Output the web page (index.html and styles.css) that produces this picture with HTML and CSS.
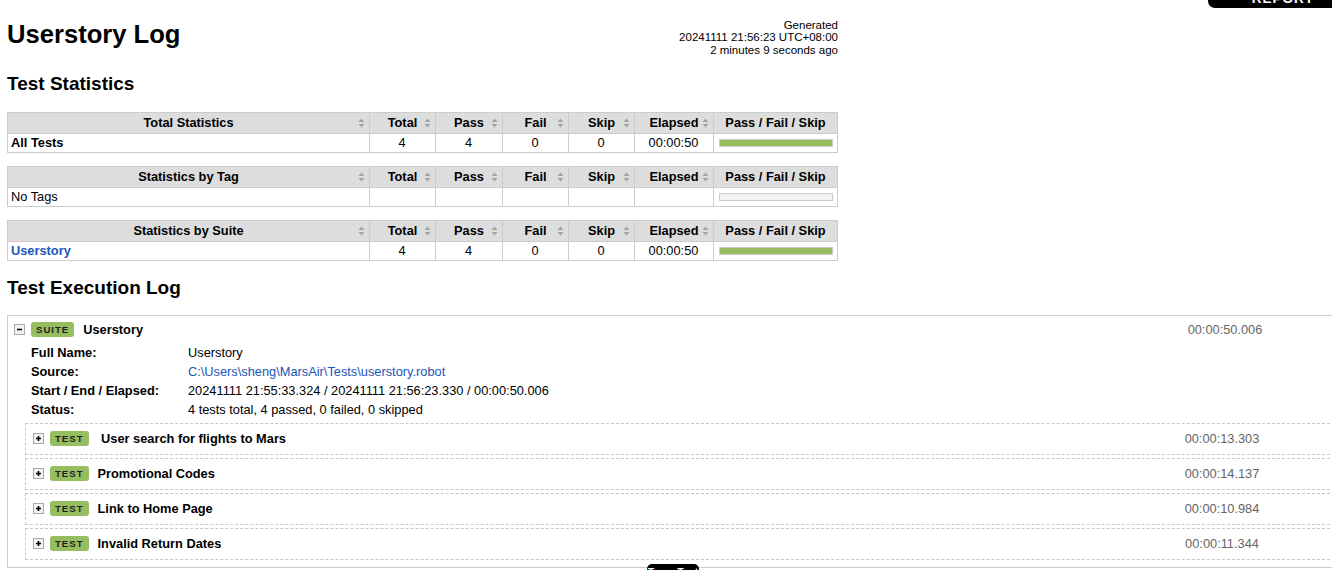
FILE: index.html
```html
<!DOCTYPE html>
<html lang="en">
<head>
<meta charset="utf-8">
<title>Userstory Log</title>
<link rel="stylesheet" href="styles.css">
</head>
<body>
<a class="report-link" href="#">REPORT</a>

<div class="header">
  <h1 class="title">Userstory Log</h1>
  <div class="generated">Generated<br>20241111 21:56:23 UTC+08:00<br>2 minutes 9 seconds ago</div>
</div>

<h2 class="section-title stats-title">Test Statistics</h2>

<table class="statistics">
  <colgroup>
    <col class="c-name"><col class="c-stat"><col class="c-stat2"><col class="c-stat"><col class="c-stat"><col class="c-elapsed"><col class="c-graph">
  </colgroup>
  <tr>
    <th>Total Statistics<svg class="sort" width="7" height="10" viewBox="0 0 7 10"><path d="M3.5 0.5L6.5 4H0.5Z M3.5 9.5L6.5 6H0.5Z"/></svg></th>
    <th>Total<svg class="sort" width="7" height="10" viewBox="0 0 7 10"><path d="M3.5 0.5L6.5 4H0.5Z M3.5 9.5L6.5 6H0.5Z"/></svg></th>
    <th>Pass<svg class="sort" width="7" height="10" viewBox="0 0 7 10"><path d="M3.5 0.5L6.5 4H0.5Z M3.5 9.5L6.5 6H0.5Z"/></svg></th>
    <th>Fail<svg class="sort" width="7" height="10" viewBox="0 0 7 10"><path d="M3.5 0.5L6.5 4H0.5Z M3.5 9.5L6.5 6H0.5Z"/></svg></th>
    <th>Skip<svg class="sort" width="7" height="10" viewBox="0 0 7 10"><path d="M3.5 0.5L6.5 4H0.5Z M3.5 9.5L6.5 6H0.5Z"/></svg></th>
    <th>Elapsed<svg class="sort" width="7" height="10" viewBox="0 0 7 10"><path d="M3.5 0.5L6.5 4H0.5Z M3.5 9.5L6.5 6H0.5Z"/></svg></th>
    <th>Pass / Fail / Skip</th>
  </tr>
  <tr>
    <td class="stat-name bold">All Tests</td>
    <td class="num">4</td><td class="num">4</td><td class="num">0</td><td class="num">0</td><td class="num">00:00:50</td>
    <td class="graph-cell"><div class="graph"><div class="pass-bar" style="width:100%"></div></div></td>
  </tr>
</table>

<table class="statistics">
  <colgroup>
    <col class="c-name"><col class="c-stat"><col class="c-stat2"><col class="c-stat"><col class="c-stat"><col class="c-elapsed"><col class="c-graph">
  </colgroup>
  <tr>
    <th>Statistics by Tag<svg class="sort" width="7" height="10" viewBox="0 0 7 10"><path d="M3.5 0.5L6.5 4H0.5Z M3.5 9.5L6.5 6H0.5Z"/></svg></th>
    <th>Total<svg class="sort" width="7" height="10" viewBox="0 0 7 10"><path d="M3.5 0.5L6.5 4H0.5Z M3.5 9.5L6.5 6H0.5Z"/></svg></th>
    <th>Pass<svg class="sort" width="7" height="10" viewBox="0 0 7 10"><path d="M3.5 0.5L6.5 4H0.5Z M3.5 9.5L6.5 6H0.5Z"/></svg></th>
    <th>Fail<svg class="sort" width="7" height="10" viewBox="0 0 7 10"><path d="M3.5 0.5L6.5 4H0.5Z M3.5 9.5L6.5 6H0.5Z"/></svg></th>
    <th>Skip<svg class="sort" width="7" height="10" viewBox="0 0 7 10"><path d="M3.5 0.5L6.5 4H0.5Z M3.5 9.5L6.5 6H0.5Z"/></svg></th>
    <th>Elapsed<svg class="sort" width="7" height="10" viewBox="0 0 7 10"><path d="M3.5 0.5L6.5 4H0.5Z M3.5 9.5L6.5 6H0.5Z"/></svg></th>
    <th>Pass / Fail / Skip</th>
  </tr>
  <tr>
    <td class="stat-name">No Tags</td>
    <td class="num"></td><td class="num"></td><td class="num"></td><td class="num"></td><td class="num"></td>
    <td class="graph-cell"><div class="graph empty"></div></td>
  </tr>
</table>

<table class="statistics">
  <colgroup>
    <col class="c-name"><col class="c-stat"><col class="c-stat2"><col class="c-stat"><col class="c-stat"><col class="c-elapsed"><col class="c-graph">
  </colgroup>
  <tr>
    <th>Statistics by Suite<svg class="sort" width="7" height="10" viewBox="0 0 7 10"><path d="M3.5 0.5L6.5 4H0.5Z M3.5 9.5L6.5 6H0.5Z"/></svg></th>
    <th>Total<svg class="sort" width="7" height="10" viewBox="0 0 7 10"><path d="M3.5 0.5L6.5 4H0.5Z M3.5 9.5L6.5 6H0.5Z"/></svg></th>
    <th>Pass<svg class="sort" width="7" height="10" viewBox="0 0 7 10"><path d="M3.5 0.5L6.5 4H0.5Z M3.5 9.5L6.5 6H0.5Z"/></svg></th>
    <th>Fail<svg class="sort" width="7" height="10" viewBox="0 0 7 10"><path d="M3.5 0.5L6.5 4H0.5Z M3.5 9.5L6.5 6H0.5Z"/></svg></th>
    <th>Skip<svg class="sort" width="7" height="10" viewBox="0 0 7 10"><path d="M3.5 0.5L6.5 4H0.5Z M3.5 9.5L6.5 6H0.5Z"/></svg></th>
    <th>Elapsed<svg class="sort" width="7" height="10" viewBox="0 0 7 10"><path d="M3.5 0.5L6.5 4H0.5Z M3.5 9.5L6.5 6H0.5Z"/></svg></th>
    <th>Pass / Fail / Skip</th>
  </tr>
  <tr>
    <td class="stat-name"><a class="link bold" href="#">Userstory</a></td>
    <td class="num">4</td><td class="num">4</td><td class="num">0</td><td class="num">0</td><td class="num">00:00:50</td>
    <td class="graph-cell"><div class="graph"><div class="pass-bar" style="width:100%"></div></div></td>
  </tr>
</table>

<h2 class="section-title exec-title">Test Execution Log</h2>

<div class="suite">
  <div class="element-header">
    <svg class="toggle" width="11" height="11" viewBox="0 0 11 11"><rect x="0.5" y="0.5" width="10" height="10" fill="#f3f3f3" stroke="#a8a8a8"/><path d="M3 5.5h5" stroke="#000" stroke-width="1.6"/></svg>
    <span class="label">SUITE</span>
    <span class="name">Userstory</span>
    <span class="elapsed">00:00:50.006</span>
  </div>
  <table class="meta">
    <tr><th>Full Name:</th><td>Userstory</td></tr>
    <tr><th>Source:</th><td><a class="link" href="#">C:\Users\sheng\MarsAir\Tests\userstory.robot</a></td></tr>
    <tr><th>Start / End / Elapsed:</th><td>20241111 21:55:33.324 / 20241111 21:56:23.330 / 00:00:50.006</td></tr>
    <tr><th>Status:</th><td>4 tests total, 4 passed, 0 failed, 0 skipped</td></tr>
  </table>
  <div class="children">
    <div class="test">
      <svg class="toggle" width="11" height="11" viewBox="0 0 11 11"><rect x="0.5" y="0.5" width="10" height="10" fill="#f3f3f3" stroke="#a8a8a8"/><path d="M3 5.5h5M5.5 3v5" stroke="#000" stroke-width="1.6"/></svg>
      <span class="label">TEST</span>
      <span class="name"> User search for flights to Mars</span>
      <span class="elapsed">00:00:13.303</span>
    </div>
    <div class="test">
      <svg class="toggle" width="11" height="11" viewBox="0 0 11 11"><rect x="0.5" y="0.5" width="10" height="10" fill="#f3f3f3" stroke="#a8a8a8"/><path d="M3 5.5h5M5.5 3v5" stroke="#000" stroke-width="1.6"/></svg>
      <span class="label">TEST</span>
      <span class="name">Promotional Codes</span>
      <span class="elapsed">00:00:14.137</span>
    </div>
    <div class="test">
      <svg class="toggle" width="11" height="11" viewBox="0 0 11 11"><rect x="0.5" y="0.5" width="10" height="10" fill="#f3f3f3" stroke="#a8a8a8"/><path d="M3 5.5h5M5.5 3v5" stroke="#000" stroke-width="1.6"/></svg>
      <span class="label">TEST</span>
      <span class="name">Link to Home Page</span>
      <span class="elapsed">00:00:10.984</span>
    </div>
    <div class="test">
      <svg class="toggle" width="11" height="11" viewBox="0 0 11 11"><rect x="0.5" y="0.5" width="10" height="10" fill="#f3f3f3" stroke="#a8a8a8"/><path d="M3 5.5h5M5.5 3v5" stroke="#000" stroke-width="1.6"/></svg>
      <span class="label">TEST</span>
      <span class="name">Invalid Return Dates</span>
      <span class="elapsed">00:00:11.344</span>
    </div>
  </div>
</div>

<div class="tooltip">Tag a Test</div>
</body>
</html>
```

FILE: styles.css
```css
html {
  overflow: hidden;
}

body {
  margin: 0;
  padding: 0 7px;
  font-family: "Liberation Sans", Arial, Helvetica, sans-serif;
  font-size: 12.8px;
  color: #000;
  background: #fff;
  position: relative;
  min-height: 570px;
}

.bold {
  font-weight: bold;
}

.link {
  color: #2156b8;
  text-decoration: none;
}

/* top-right fixed link */
.report-link {
  position: absolute;
  top: -20px;
  right: -26px;
  width: 150px;
  height: 28px;
  box-sizing: border-box;
  padding-top: 11px;
  background: #000;
  color: #fff;
  font-weight: bold;
  font-size: 13.5px;
  line-height: 16px;
  letter-spacing: 1px;
  text-align: center;
  text-decoration: none;
  border-radius: 0 0 0 7px;
}

/* header */
.header {
  display: flex;
  justify-content: space-between;
  align-items: flex-start;
  width: 831px;
  height: 73px;
}

.title {
  margin: 20px 0 0;
  font-size: 25.6px;
  line-height: 29px;
  font-weight: bold;
}

.generated {
  margin-top: 19px;
  font-size: 11.5px;
  line-height: 12.3px;
  text-align: right;
  white-space: nowrap;
}

.section-title {
  margin: 0;
  font-size: 19px;
  line-height: 22px;
  font-weight: bold;
}

.stats-title {
  margin-bottom: 17px;
}

.exec-title {
  margin-top: 16px;
  margin-bottom: 16px;
}

/* statistics tables */
.statistics {
  width: 831px;
  table-layout: fixed;
  border-collapse: collapse;
  margin-bottom: 12.8px;
}

.c-name { width: 362px; }
.c-stat { width: 66px; }
.c-stat2 { width: 67px; }
.c-elapsed { width: 79px; }
.c-graph { width: 124px; }

.statistics th {
  position: relative;
  background: #ddd;
  border: 1px solid #ccc;
  padding: 2px 5px;
  line-height: 16px;
  font-weight: bold;
  text-align: center;
  white-space: nowrap;
}

.statistics td {
  border: 1px solid #ccc;
  padding: 2px 4px 2px 3px;
  line-height: 14px;
  vertical-align: middle;
}

.statistics td.num {
  text-align: center;
}

.sort {
  position: absolute;
  right: 4px;
  top: 50%;
  margin-top: -5px;
  fill: #a3a3a3;
}

.graph-cell {
  padding-left: 5px !important;
}

.graph {
  height: 6px;
  border: 1px solid #ccc;
  background: #f2f2f2;
  overflow: hidden;
}

.pass-bar {
  height: 100%;
  background: #97bd61;
}

/* execution log */
.suite {
  width: 1345px;
  box-sizing: border-box;
  border: 1px solid #ccc;
  padding: 4px 6px 7px 6px;
}

.element-header {
  display: flex;
  align-items: center;
  height: 20px;
}

.toggle {
  display: block;
  flex: none;
  margin-right: 6px;
}

.label {
  flex: none;
  height: 15px;
  line-height: 15px;
  padding: 0 5px;
  background: #97bd61;
  border-radius: 3px;
  font-size: 9.6px;
  font-weight: bold;
  letter-spacing: 1px;
  color: #1e1e1e;
  margin-right: 9px;
}

.name {
  flex: 1;
  font-weight: bold;
  white-space: pre;
}

.elapsed {
  flex: none;
  width: 150px;
  text-align: center;
  color: #666;
}

.element-header .elapsed {
  margin-right: 45px;
}

.meta {
  margin: 3px 0 0 17px;
  border-collapse: collapse;
}

.meta th {
  width: 157px;
  padding: 0;
  text-align: left;
  font-weight: bold;
  line-height: 19px;
  vertical-align: top;
}

.meta td {
  padding: 0;
  line-height: 19px;
  white-space: nowrap;
}

.children {
  margin: 4px 0 0 11px;
  display: flex;
  flex-direction: column;
  gap: 3px;
}

.test {
  display: flex;
  align-items: center;
  height: 32px;
  box-sizing: border-box;
  border: 1px dashed #c8c8c8;
  padding: 0 7px;
}

.test .elapsed {
  margin-right: 40px;
}

/* bottom floating tip */
.tooltip {
  position: absolute;
  left: 647px;
  top: 564px;
  width: 52px;
  height: 20px;
  box-sizing: border-box;
  padding-top: 2px;
  background: #000;
  color: #fff;
  border-radius: 5px;
  font-size: 10.5px;
  font-weight: bold;
  text-align: center;
  white-space: nowrap;
  overflow: hidden;
}
```
